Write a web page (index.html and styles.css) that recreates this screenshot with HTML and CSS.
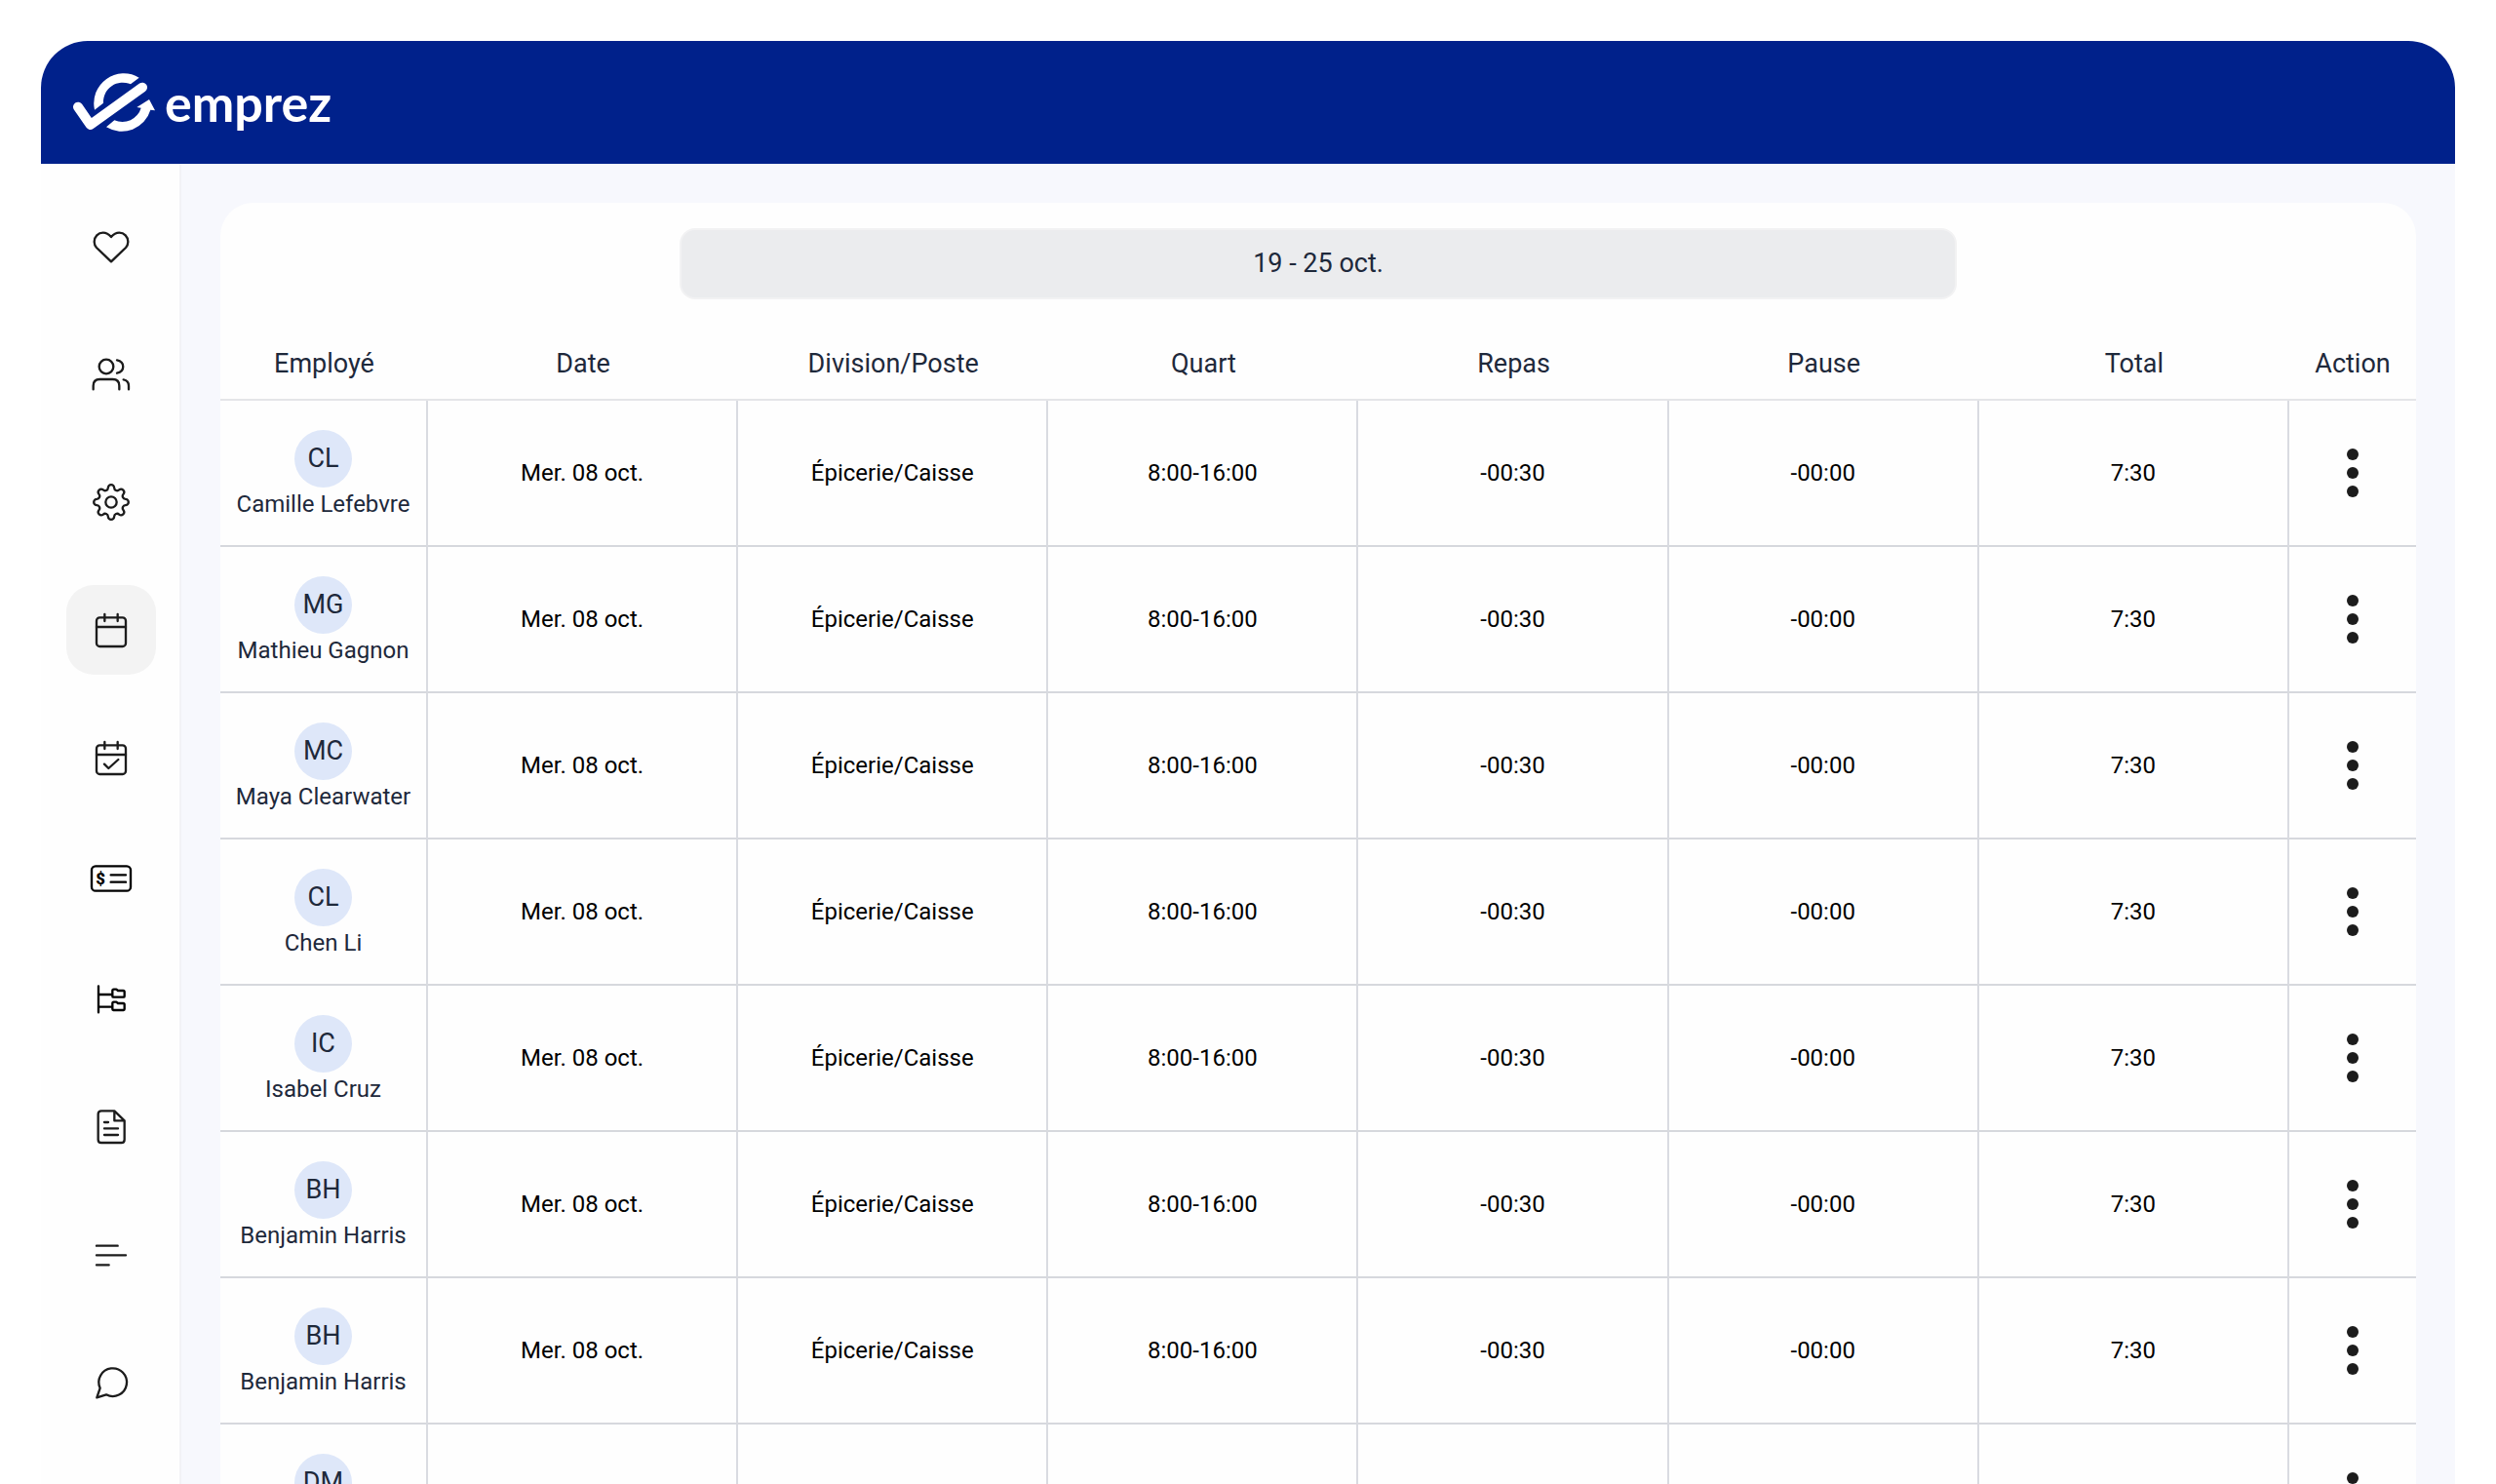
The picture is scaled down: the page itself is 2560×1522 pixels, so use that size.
FILE: index.html
```html
<!DOCTYPE html>
<html lang="fr">

<head>
    <meta charset="UTF-8">
    <title>emprez</title>
    <link rel="stylesheet" href="styles.css">
</head>

<body>
<div class="app">
    <header class="topbar">
        <a class="brand" href="#">
            <svg class="brand-icon" viewBox="135 133 252 186" aria-hidden="true">
                <path class="check" d="M150 240 L188 295 L348 180"/>
                <path d="M201 249 A92 92 0 0 1 338 150 L312 170 A60 60 0 0 0 228 228 Z"/>
                <path d="M237 302 L262 281 A60 60 0 0 0 344 243 L331 241 L369 217 L387 251 L373 249 A92 92 0 0 1 237 302 Z"/>
            </svg>
            <span class="brand-name">emprez</span>
        </a>
    </header>

    <div class="content">
        <nav class="sidebar">
            <a class="nav-item" href="#" aria-label="Favoris">
                <svg viewBox="-72 -72 144 144"><path d="M0 46 L-45 3 A28 28 0 0 1 -52 -15 A27 28 0 0 1 -25 -43 Q-11 -43 0 -30 Q11 -43 25 -43 A27 28 0 0 1 52 -15 A28 28 0 0 1 45 3 Z"/></svg>
            </a>
            <a class="nav-item" href="#" aria-label="Employés">
                <svg viewBox="-72 -74 144 144"><circle cx="-15" cy="-26" r="22"/><path d="M-55 44 V33 Q-55 13 -35 13 H5 Q25 13 25 33 V44 M18 -46 C43 -41 43 -11 18 -6 M38 14 C49 16 54 24 54 33 V44"/></svg>
            </a>
            <a class="nav-item" href="#" aria-label="Paramètres">
                <svg viewBox="-72 -72 144 144"><circle cx="0" cy="0" r="17"/><path d="M-9.4 -44 A9.4 9.4 0 0 1 9.4 -44 A9 9 0 0 0 24.5 -37.7 A9.4 9.4 0 0 1 37.7 -24.5 A9 9 0 0 0 44 -9.4 A9.4 9.4 0 0 1 44 9.4 A9 9 0 0 0 37.7 24.5 A9.4 9.4 0 0 1 24.5 37.7 A9 9 0 0 0 9.4 44 A9.4 9.4 0 0 1 -9.4 44 A9 9 0 0 0 -24.5 37.7 A9.4 9.4 0 0 1 -37.7 24.5 A9 9 0 0 0 -44 9.4 A9.4 9.4 0 0 1 -44 -9.4 A9 9 0 0 0 -37.7 -24.5 A9.4 9.4 0 0 1 -24.5 -37.7 A9 9 0 0 0 -9.4 -44 Z"/></svg>
            </a>
            <a class="nav-item active" href="#" aria-label="Calendrier">
                <svg viewBox="-72 -72 144 144"><rect x="-45" y="-38" width="90" height="89" rx="10"/><path d="M-45 -9 H45 M-20 -48 V-27 M20 -48 V-27"/></svg>
            </a>
            <a class="nav-item" href="#" aria-label="Approbations">
                <svg viewBox="-72 -72 144 144"><rect x="-45" y="-38" width="90" height="89" rx="10"/><path d="M-45 -9 H45 M-20 -48 V-27 M20 -48 V-27 M-21 20 L-8 33 L22 6"/></svg>
            </a>
            <a class="nav-item short dark" href="#" aria-label="Paie">
                <svg viewBox="-72 -72 144 144"><rect x="-60" y="-38" width="120" height="76" rx="12"/><path d="M-1 -11 H45 M-1 11 H45"/><text x="-33" y="17">$</text></svg>
            </a>
            <a class="nav-item dark" href="#" aria-label="Divisions">
                <svg viewBox="-72 -72 144 144"><path d="M-39 -41 V40 M-39 -15 H4 M-39 23 H4 M4 -27 Q4 -31 8 -31 H16 L21 -27 H37 Q41 -27 41 -23 V-10 Q41 -7 38 -7 H7 Q4 -7 4 -10 Z M4 12 Q4 8 8 8 H16 L21 12 H37 Q41 12 41 16 V30 Q41 33 38 33 H7 Q4 33 4 30 Z"/></svg>
            </a>
            <a class="nav-item" href="#" aria-label="Documents">
                <svg viewBox="-72 -72 144 144"><path d="M-30 -50 H10 L41 -20 V38 Q41 48 31 48 H-30 Q-40 48 -40 38 V-40 Q-40 -50 -30 -50 Z M10 -50 V-20 H41 M-21 -15 H-9 M-21 4 H21 M-21 24 H21"/></svg>
            </a>
            <a class="nav-item" href="#" aria-label="Rapports">
                <svg viewBox="-72 -72 144 144"><path d="M-45 -28 H20 M-45 1 H45 M-45 31 H-7"/></svg>
            </a>
            <a class="nav-item" href="#" aria-label="Messages">
                <svg viewBox="-72 -72 144 144"><path d="M-34 17 A43 43 0 1 1 -15 37 L-44 46 Z"/></svg>
            </a>
        </nav>

        <main class="main">
            <section class="card">
                <button class="period" type="button">19 - 25 oct.</button>
                <table class="hours">
                    <thead>
                    <tr>
                        <th class="col-employee">Employé</th>
                        <th>Date</th>
                        <th>Division/Poste</th>
                        <th>Quart</th>
                        <th>Repas</th>
                        <th>Pause</th>
                        <th>Total</th>
                        <th class="col-action">Action</th>
                    </tr>
                    </thead>
                    <tbody>
                    <tr>
                        <td><div class="employee"><span class="avatar">CL</span><span class="name">Camille Lefebvre</span></div></td>
                        <td>Mer. 08 oct.</td>
                        <td>Épicerie/Caisse</td>
                        <td>8:00-16:00</td>
                        <td>-00:30</td>
                        <td>-00:00</td>
                        <td>7:30</td>
                        <td><button class="more" type="button" aria-label="Action"><i></i><i></i><i></i></button></td>
                    </tr>
                    <tr>
                        <td><div class="employee"><span class="avatar">MG</span><span class="name">Mathieu Gagnon</span></div></td>
                        <td>Mer. 08 oct.</td>
                        <td>Épicerie/Caisse</td>
                        <td>8:00-16:00</td>
                        <td>-00:30</td>
                        <td>-00:00</td>
                        <td>7:30</td>
                        <td><button class="more" type="button" aria-label="Action"><i></i><i></i><i></i></button></td>
                    </tr>
                    <tr>
                        <td><div class="employee"><span class="avatar">MC</span><span class="name">Maya Clearwater</span></div></td>
                        <td>Mer. 08 oct.</td>
                        <td>Épicerie/Caisse</td>
                        <td>8:00-16:00</td>
                        <td>-00:30</td>
                        <td>-00:00</td>
                        <td>7:30</td>
                        <td><button class="more" type="button" aria-label="Action"><i></i><i></i><i></i></button></td>
                    </tr>
                    <tr>
                        <td><div class="employee"><span class="avatar">CL</span><span class="name">Chen Li</span></div></td>
                        <td>Mer. 08 oct.</td>
                        <td>Épicerie/Caisse</td>
                        <td>8:00-16:00</td>
                        <td>-00:30</td>
                        <td>-00:00</td>
                        <td>7:30</td>
                        <td><button class="more" type="button" aria-label="Action"><i></i><i></i><i></i></button></td>
                    </tr>
                    <tr>
                        <td><div class="employee"><span class="avatar">IC</span><span class="name">Isabel Cruz</span></div></td>
                        <td>Mer. 08 oct.</td>
                        <td>Épicerie/Caisse</td>
                        <td>8:00-16:00</td>
                        <td>-00:30</td>
                        <td>-00:00</td>
                        <td>7:30</td>
                        <td><button class="more" type="button" aria-label="Action"><i></i><i></i><i></i></button></td>
                    </tr>
                    <tr>
                        <td><div class="employee"><span class="avatar">BH</span><span class="name">Benjamin Harris</span></div></td>
                        <td>Mer. 08 oct.</td>
                        <td>Épicerie/Caisse</td>
                        <td>8:00-16:00</td>
                        <td>-00:30</td>
                        <td>-00:00</td>
                        <td>7:30</td>
                        <td><button class="more" type="button" aria-label="Action"><i></i><i></i><i></i></button></td>
                    </tr>
                    <tr>
                        <td><div class="employee"><span class="avatar">BH</span><span class="name">Benjamin Harris</span></div></td>
                        <td>Mer. 08 oct.</td>
                        <td>Épicerie/Caisse</td>
                        <td>8:00-16:00</td>
                        <td>-00:30</td>
                        <td>-00:00</td>
                        <td>7:30</td>
                        <td><button class="more" type="button" aria-label="Action"><i></i><i></i><i></i></button></td>
                    </tr>
                    <tr>
                        <td><div class="employee"><span class="avatar">DM</span><span class="name"></span></div></td>
                        <td></td>
                        <td></td>
                        <td></td>
                        <td></td>
                        <td></td>
                        <td></td>
                        <td><button class="more" type="button" aria-label="Action"><i></i><i></i><i></i></button></td>
                    </tr>
                    </tbody>
                </table>
            </section>
        </main>
    </div>
</div>
</body>
</html>
```
FILE: styles.css
```css
* {
    margin: 0;
    padding: 0;
    box-sizing: border-box;
}

body {
    height: 100vh;
    padding: 42px 42px 0;
    overflow: hidden;
    background-color: #ffffff;
    font-family: Roboto, "Liberation Sans", sans-serif;
    color: #1e293b;
}

.app {
    border-radius: 48px 48px 0 0;
    overflow: hidden;
}

.topbar {
    display: flex;
    align-items: center;
    height: 126px;
    padding-left: 33px;
    background-color: #00218b;
}

.brand {
    display: flex;
    align-items: center;
    gap: 10px;
    color: #ffffff;
    text-decoration: none;
}

.brand-icon {
    width: 84px;
    height: 62px;
    fill: #ffffff;
}

.brand-icon .check {
    fill: none;
    stroke: #ffffff;
    stroke-width: 30;
    stroke-linecap: round;
    stroke-linejoin: round;
}

.brand-name {
    font-family: Lato, sans-serif;
    font-weight: 700;
    font-size: 52px;
    line-height: 60px;
}

.content {
    display: flex;
}

.sidebar {
    display: flex;
    flex-direction: column;
    gap: 39px;
    padding: 39px 24px 39px 26px;
    background-color: #fefefe;
    border-right: 2px solid #f2f2f6;
}

.nav-item {
    display: flex;
    flex-shrink: 0;
    align-items: center;
    justify-content: center;
    width: 92px;
    height: 92px;
    border-radius: 28px;
}

.nav-item.short {
    height: 78px;
}

.nav-item.active {
    background-color: #f3f3f3;
}

.nav-item svg {
    width: 48px;
    height: 48px;
    fill: none;
    stroke: #1c1c1c;
    stroke-width: 7;
    stroke-linecap: round;
    stroke-linejoin: round;
}

.nav-item.dark svg {
    stroke: #000000;
}

.nav-item text {
    fill: #000000;
    stroke: none;
    font-size: 50px;
    font-weight: 900;
    text-anchor: middle;
}

.main {
    flex: 1;
    padding: 40px 40px 0;
    background-color: #f7f8fd;
}

.card {
    padding-top: 26px;
    background-color: #fefefe;
    border-radius: 34px 34px 0 0;
    overflow: hidden;
}

.period {
    display: block;
    width: 1310px;
    max-width: 90%;
    height: 73px;
    margin: 0 auto 30px;
    padding-bottom: 2px;
    background-color: #ebecee;
    border: 2px solid #f2f2f3;
    border-radius: 16px;
    font-family: inherit;
    font-size: 27px;
    color: #1e293b;
}

.hours {
    width: 100%;
    table-layout: fixed;
    border-collapse: separate;
    border-spacing: 0;
    text-align: center;
}

.hours th {
    height: 74px;
    border-bottom: 2px solid #e4e5e8;
    font-size: 27px;
    font-weight: 400;
}

.col-employee {
    width: 213px;
}

.col-action {
    width: 130px;
}

.hours td {
    height: 150px;
    border-right: 2px solid #d9dbe1;
    border-bottom: 2px solid #d6d8dd;
    font-size: 24px;
    color: #000000;
    vertical-align: middle;
}

.hours td:last-child {
    border-right: none;
}

.employee {
    display: flex;
    flex-direction: column;
    align-items: center;
    gap: 4px;
}

.avatar {
    display: flex;
    align-items: center;
    justify-content: center;
    width: 59px;
    height: 59px;
    border-radius: 50%;
    background-color: #dee7f9;
    font-size: 27px;
    color: #1e293b;
}

.name {
    height: 26px;
    line-height: 26px;
    color: #1e293b;
}

.more {
    display: inline-flex;
    flex-direction: column;
    align-items: center;
    gap: 7px;
    padding: 4px 12px;
    background: none;
    border: none;
    vertical-align: middle;
}

.more i {
    width: 12px;
    height: 12px;
    border-radius: 50%;
    background-color: #1c1c1c;
}
```
